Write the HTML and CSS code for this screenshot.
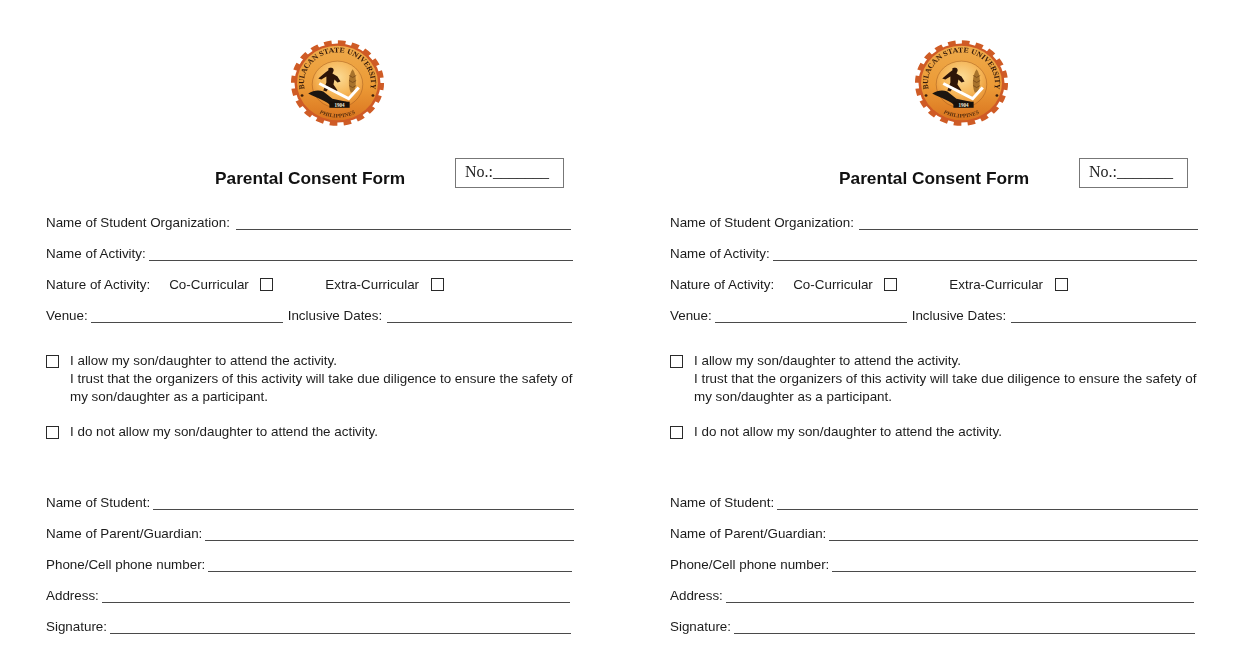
FILE: index.html
```html
<!DOCTYPE html>
<html lang="en">
<head>
<meta charset="utf-8">
<title>Parental Consent Form</title>
<link rel="stylesheet" href="styles.css">
</head>
<body>
<main class="sheet">
  <section class="form">
    <svg class="logo" viewBox="0 0 92 85" aria-label="Bulacan State University seal">
      <defs>
        <linearGradient id="gold1" x1="0" y1="0" x2="0" y2="1"><stop offset="0" stop-color="#eeaa4a"/><stop offset=".55" stop-color="#ec9a36"/><stop offset="1" stop-color="#d9741f"/></linearGradient>
        <radialGradient id="core1" cx="50%" cy="35%" r="65%"><stop offset="0" stop-color="#fbdc96"/><stop offset=".6" stop-color="#f5b455"/><stop offset="1" stop-color="#e58a2c"/></radialGradient>
        <path id="arcTop1" d="M14.600 52.700A33 33 0 1 1 77.400 52.700"/>
        <path id="arcBot1" d="M22 70.700A37 37 0 0 0 70 70.700"/>
      </defs>
      <g transform="translate(46 42.500) scale(1 .92) translate(-46 -42.500)">
        <circle class="teeth" cx="46" cy="42.500" r="43.500"/>
        <circle class="gear" cx="46" cy="42.500" r="42.500"/>
        <circle cx="46" cy="42.500" r="40" fill="url(#gold1)"/>
        <circle cx="46" cy="44" r="25" fill="url(#core1)" stroke="#8c4a17" stroke-width=".4"/>
        <circle class="dot" cx="11" cy="56" r="1.400"/>
        <circle class="dot" cx="81" cy="56" r="1.400"/>
        <text class="seal-text"><textPath href="#arcTop1" startOffset="50%" text-anchor="middle">BULACAN STATE UNIVERSITY</textPath></text>
        <text class="seal-small"><textPath href="#arcBot1" startOffset="50%" text-anchor="middle">PHILIPPINES</textPath></text>
      </g>
      <path class="sheaf" d="M61 29c4 5 4 16 1 23h-3c-3-8-2-18 2-23z"/>
      <path class="sheaf-lines" d="M57.500 35l3.500 2 3.500-2M57.500 40l3.500 2 3.500-2M57.500 45l3.500 2 3.500-2"/>
      <path class="figure" d="M37 28c3-2 6 0 5 3l-1 2 5 3 3 5-3 1-3-3-1 5 4 6-2 2-6-5-3 4-3-1 3-8v-6l-5 3-3-1 7-6 3-2z"/>
      <path class="ground" d="M17 53c5-3 10-4 15-2l9 7 14 3-2 5H40c-4-6-14-8-23-13z"/>
      <path class="check" d="M28 43l29 15 10-11"/>
      <rect x="38" y="61" width="20" height="6" fill="#17110c"/>
      <text class="year" x="48" y="66" text-anchor="middle">1904</text>
    </svg>
    <div class="title-row">
      <h1 class="title">Parental Consent Form</h1>
      <div class="no-box">No.:_______</div>
    </div>
    <div class="row w525"><span>Name of Student Organization:</span><span class="line gap-org"></span></div>
    <div class="row w527"><span>Name of Activity:</span><span class="line"></span></div>
    <div class="row">
      <span>Nature of Activity:</span><span class="opt-a">Co-Curricular</span><span class="box gap-box"></span>
      <span class="opt-b">Extra-Curricular</span><span class="box gap-box"></span>
    </div>
    <div class="row w526"><span>Venue:</span><span class="line venue"></span><span class="dates">Inclusive Dates:</span><span class="line gap-dates"></span></div>
    <div class="choices">
      <div class="choice"><span class="box"></span><p>I allow my son/daughter to attend the activity.<br>I trust that the organizers of this activity will take due diligence to ensure the safety of my son/daughter as a participant.</p></div>
      <div class="choice"><span class="box"></span><p>I do not allow my son/daughter to attend the activity.</p></div>
    </div>
    <div class="row w528"><span>Name of Student:</span><span class="line"></span></div>
    <div class="row w528"><span>Name of Parent/Guardian:</span><span class="line"></span></div>
    <div class="row w526"><span>Phone/Cell phone number:</span><span class="line"></span></div>
    <div class="row w524"><span>Address:</span><span class="line"></span></div>
    <div class="row w525"><span>Signature:</span><span class="line"></span></div>
  </section>

  <section class="form">
    <svg class="logo" viewBox="0 0 92 85" aria-label="Bulacan State University seal">
      <defs>
        <linearGradient id="gold2" x1="0" y1="0" x2="0" y2="1"><stop offset="0" stop-color="#eeaa4a"/><stop offset=".55" stop-color="#ec9a36"/><stop offset="1" stop-color="#d9741f"/></linearGradient>
        <radialGradient id="core2" cx="50%" cy="35%" r="65%"><stop offset="0" stop-color="#fbdc96"/><stop offset=".6" stop-color="#f5b455"/><stop offset="1" stop-color="#e58a2c"/></radialGradient>
        <path id="arcTop2" d="M14.600 52.700A33 33 0 1 1 77.400 52.700"/>
        <path id="arcBot2" d="M22 70.700A37 37 0 0 0 70 70.700"/>
      </defs>
      <g transform="translate(46 42.500) scale(1 .92) translate(-46 -42.500)">
        <circle class="teeth" cx="46" cy="42.500" r="43.500"/>
        <circle class="gear" cx="46" cy="42.500" r="42.500"/>
        <circle cx="46" cy="42.500" r="40" fill="url(#gold2)"/>
        <circle cx="46" cy="44" r="25" fill="url(#core2)" stroke="#8c4a17" stroke-width=".4"/>
        <circle class="dot" cx="11" cy="56" r="1.400"/>
        <circle class="dot" cx="81" cy="56" r="1.400"/>
        <text class="seal-text"><textPath href="#arcTop2" startOffset="50%" text-anchor="middle">BULACAN STATE UNIVERSITY</textPath></text>
        <text class="seal-small"><textPath href="#arcBot2" startOffset="50%" text-anchor="middle">PHILIPPINES</textPath></text>
      </g>
      <path class="sheaf" d="M61 29c4 5 4 16 1 23h-3c-3-8-2-18 2-23z"/>
      <path class="sheaf-lines" d="M57.500 35l3.500 2 3.500-2M57.500 40l3.500 2 3.500-2M57.500 45l3.500 2 3.500-2"/>
      <path class="figure" d="M37 28c3-2 6 0 5 3l-1 2 5 3 3 5-3 1-3-3-1 5 4 6-2 2-6-5-3 4-3-1 3-8v-6l-5 3-3-1 7-6 3-2z"/>
      <path class="ground" d="M17 53c5-3 10-4 15-2l9 7 14 3-2 5H40c-4-6-14-8-23-13z"/>
      <path class="check" d="M28 43l29 15 10-11"/>
      <rect x="38" y="61" width="20" height="6" fill="#17110c"/>
      <text class="year" x="48" y="66" text-anchor="middle">1904</text>
    </svg>
    <div class="title-row">
      <h1 class="title">Parental Consent Form</h1>
      <div class="no-box">No.:_______</div>
    </div>
    <div class="row w528"><span>Name of Student Organization:</span><span class="line gap-org-r"></span></div>
    <div class="row w527"><span>Name of Activity:</span><span class="line"></span></div>
    <div class="row">
      <span>Nature of Activity:</span><span class="opt-a">Co-Curricular</span><span class="box gap-box"></span>
      <span class="opt-b">Extra-Curricular</span><span class="box gap-box"></span>
    </div>
    <div class="row w526"><span>Venue:</span><span class="line venue"></span><span class="dates">Inclusive Dates:</span><span class="line gap-dates"></span></div>
    <div class="choices">
      <div class="choice"><span class="box"></span><p>I allow my son/daughter to attend the activity.<br>I trust that the organizers of this activity will take due diligence to ensure the safety of my son/daughter as a participant.</p></div>
      <div class="choice"><span class="box"></span><p>I do not allow my son/daughter to attend the activity.</p></div>
    </div>
    <div class="row w528"><span>Name of Student:</span><span class="line"></span></div>
    <div class="row w528"><span>Name of Parent/Guardian:</span><span class="line"></span></div>
    <div class="row w526"><span>Phone/Cell phone number:</span><span class="line"></span></div>
    <div class="row w524"><span>Address:</span><span class="line"></span></div>
    <div class="row w525"><span>Signature:</span><span class="line"></span></div>
  </section>
</main>
</body>
</html>
```
FILE: styles.css
```css
* { box-sizing: border-box; }
html, body { margin: 0; height: 100%; background: #fff; overflow: hidden; }
body { font-family: "Liberation Sans", Arial, sans-serif; font-size: 13.4px; color: #1c1c1c; }
.sheet { display: grid; grid-template-columns: 624px 1fr; padding: 40px 0 0 46px; filter: blur(.3px); }
.form { display: flex; flex-direction: column; align-items: flex-start; }
.logo { width: 95px; height: 86px; margin-left: 244px; filter: blur(.5px); overflow: visible; }
.teeth { fill: none; stroke: #cf5c26; stroke-width: 5; stroke-dasharray: 7.500 6.170; }
.gear { fill: #cf5a25; }
.dot { fill: #3a1d0c; }
.seal-text { font: 700 7.800px "Liberation Serif", serif; fill: #33190a; }
.seal-small { font: 700 5.800px "Liberation Serif", serif; fill: #5b3210; }
.sheaf { fill: #a8732c; }
.sheaf-lines { fill: none; stroke: #6e4315; stroke-width: .7; }
.figure { fill: #2e1508; }
.ground { fill: #1c1610; }
.check { fill: none; stroke: #fff; stroke-width: 3; stroke-linejoin: miter; }
.year { font: 700 5px "Liberation Serif", serif; fill: #f6ecd8; }
.title-row { display: flex; align-items: flex-start; margin-top: 32px; height: 30px; padding-left: 169px; }
.title { width: 240px; margin: 9px 0 0; font-size: 17.300px; line-height: 22px; font-weight: 700; color: #111; white-space: nowrap; }
.no-box { width: 109px; height: 30px; border: 1px solid #777; padding: 3px 0 0 9px; font: 16px/20px "Liberation Serif", serif; color: #222; white-space: nowrap; }
.row { display: flex; align-items: center; height: 31px; white-space: nowrap; }
.title-row + .row { margin-top: 19px; }
.w524 { width: 524px; }
.w525 { width: 525px; }
.w526 { width: 526px; }
.w527 { width: 527px; }
.w528 { width: 528px; }
.line { flex: 1; height: 1px; margin: 13px 0 0 3px; background: #4a4a4a; }
.gap-org { margin-left: 6px; }
.gap-org-r { margin-left: 5px; }
.venue { flex: none; width: 192px; }
.dates { margin-left: 5px; }
.gap-dates { margin-left: 5px; }
.opt-a { margin-left: 19px; }
.opt-b { margin-left: 52px; }
.gap-box { margin-left: 11.500px; }
.box { flex: none; width: 13px; height: 13px; border: 1.5px solid #2a2a2a; background: #fff; }
.choices { display: flex; flex-direction: column; gap: 17px; width: 528px; margin: 21px 0 46px; }
.choice { display: flex; align-items: flex-start; gap: 11px; }
.choice .box { margin-top: 3px; }
.choice p { margin: 0; line-height: 18px; }
```
